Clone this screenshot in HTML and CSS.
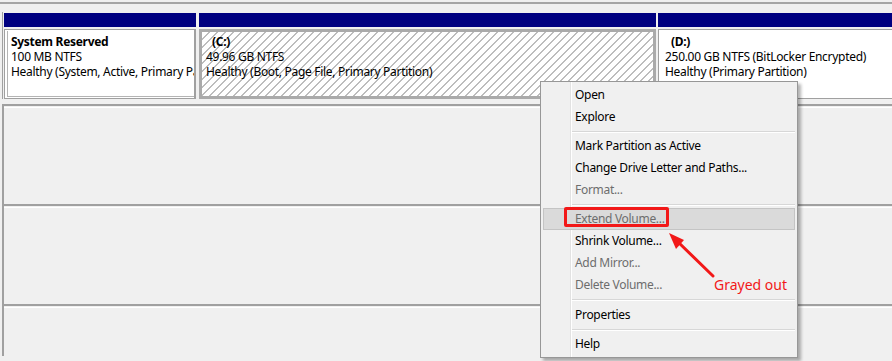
FILE: index.html
```html
<!DOCTYPE html>
<html lang="en">
<head>
  <meta charset="UTF-8" />
  <title>Disk Management</title>
  <link rel="stylesheet" href="styles.css">
</head>
<body>
  <div class="top-strip"></div>

  <div class="disk">
    <div class="partition part-system">
      <div class="part-bar"></div>
      <div class="part-body">
        <div class="part-inner">
          <div class="part-name">System Reserved</div>
          <div>100 MB NTFS</div>
          <div class="part-clip">Healthy (System, Active, Primary Partition)</div>
        </div>
      </div>
    </div>
    <div class="partition part-c">
      <div class="part-bar"></div>
      <div class="part-body hatched">
        <div class="part-name indent">(C:)</div>
        <div>49.96 GB NTFS</div>
        <div>Healthy (Boot, Page File, Primary Partition)</div>
      </div>
    </div>
    <div class="partition part-d">
      <div class="part-bar"></div>
      <div class="part-body">
        <div class="part-name indent">(D:)</div>
        <div>250.00 GB NTFS (BitLocker Encrypted)</div>
        <div>Healthy (Primary Partition)</div>
      </div>
    </div>
  </div>

  <div class="empty-row first-row"></div>
  <div class="empty-row"></div>
  <div class="empty-row last-row"></div>

  <ul class="context-menu">
    <li class="menu-item">Open</li>
    <li class="menu-item">Explore</li>
    <li class="menu-sep"></li>
    <li class="menu-item">Mark Partition as Active</li>
    <li class="menu-item">Change Drive Letter and Paths...</li>
    <li class="menu-item disabled">Format...</li>
    <li class="menu-sep sep-small"></li>
    <li class="menu-item disabled hover">Extend Volume...</li>
    <li class="menu-item">Shrink Volume...</li>
    <li class="menu-item disabled">Add Mirror...</li>
    <li class="menu-item disabled">Delete Volume...</li>
    <li class="menu-sep sep-large"></li>
    <li class="menu-item">Properties</li>
    <li class="menu-sep"></li>
    <li class="menu-item">Help</li>
  </ul>

  <div class="callout-box"></div>
  <svg class="callout-arrow" width="892" height="361" viewBox="0 0 892 361">
    <line x1="713" y1="276" x2="676" y2="240" stroke="#f21818" stroke-width="3" stroke-linecap="round"/>
    <polygon points="669,233 684,240 676,249" fill="#f21818"/>
  </svg>
  <div class="callout-text">Grayed out</div>
</body>
</html>
```

FILE: styles.css
```css
body {
  margin: 0;
  padding: 0;
  background-color: #f0f0f0;
  font-family: 'Segoe UI', 'Noto Sans', sans-serif;
  font-size: 12px;
  letter-spacing: -0.3px;
  color: #000000;
  width: 892px;
  height: 361px;
  overflow: hidden;
}

.top-strip {
  height: 2px;
  border-bottom: 2px solid #a5a5a5;
  margin-bottom: 8px;
}

.disk {
  display: flex;
  gap: 3px;
  padding-left: 1px;
  margin-left: 2px;
  border-left: 1px solid #a0a0a0;
  padding-top: 1px;
  height: 86px;
  white-space: nowrap;
}

.partition {
  display: flex;
  flex-direction: column;
  flex-shrink: 0;
}

.part-system { width: 192px; }
.part-c { width: 457px; }
.part-d { width: 240px; margin-left: -1px; }

.part-bar {
  height: 14px;
  background-color: #000080;
  margin-bottom: 2px;
}

.part-body {
  flex: 1;
  background-color: #ffffff;
  border: 1px solid #a0a0a0;
  padding: 4px 4px 0 4px;
  line-height: 15px;
  overflow: hidden;
}

.part-system .part-body {
  padding: 1px 0 1px 2px;
  border-right-width: 2px;
}

.part-inner {
  height: 100%;
  border-left: 1px solid #b4b4b4;
  border-bottom: 1px solid #b4b4b4;
  padding: 3px 0 0 3px;
  box-sizing: border-box;
  overflow: hidden;
}

.part-clip {
  overflow: hidden;
}

.part-name {
  font-weight: bold;
}

.indent {
  padding-left: 6px;
}

.hatched {
  border: 3px solid #aaaaaa;
  padding: 2px 4px 0 4px;
  background-color: #ffffff;
  background-image: repeating-linear-gradient(135deg, #ffffff 0, #ffffff 4.6px, #bdbdbd 4.6px, #bdbdbd 5.66px);
}

.part-d .part-body {
  border-right: none;
  padding-left: 6px;
}

.empty-row {
  height: 98px;
  margin-left: 2px;
  border-left: 2px solid #a0a0a0;
  border-top: 2px solid #a0a0a0;
  background: linear-gradient(#f0f0f0 0, #f0f0f0 1px, #ffffff 1px, #ffffff 2px, #f0f0f0 2px);
}

.first-row {
  margin-top: 5px;
}

.last-row {
  height: 50px;
}

.context-menu {
  position: absolute;
  left: 540px;
  top: 81px;
  width: 252px;
  margin: 0;
  padding: 2px;
  list-style: none;
  background-color: #f0f0f0;
  border: 1px solid #979797;
  box-shadow: 3px 3px 3px rgba(0, 0, 0, 0.3);
  background-image: linear-gradient(90deg, transparent 29px, #e2e2e2 29px, #e2e2e2 30px, #ffffff 30px, #ffffff 31px, transparent 31px);
}

.menu-item {
  height: 22px;
  line-height: 19px;
  padding-left: 31px;
  border: 1px solid transparent;
  box-sizing: border-box;
}

.menu-item.disabled {
  color: #6d6d6d;
}

.menu-item.hover {
  background-color: #dadada;
  border-color: #c4c4c4;
}

.menu-sep {
  height: 7px;
  margin-left: 29px;
  background: linear-gradient(transparent 3px, #d7d7d7 3px, #d7d7d7 4px, #ffffff 4px, #ffffff 5px, transparent 5px);
}

.sep-small { height: 7px; }
.sep-large { height: 8px; }

.callout-box {
  position: absolute;
  left: 564px;
  top: 207px;
  width: 99px;
  height: 14px;
  border: 3px solid #f21818;
  border-radius: 2px;
}

.callout-arrow {
  position: absolute;
  left: 0;
  top: 0;
}

.callout-text {
  position: absolute;
  left: 714px;
  top: 275px;
  font-size: 14px;
  letter-spacing: 0;
  color: #f21818;
}
```
